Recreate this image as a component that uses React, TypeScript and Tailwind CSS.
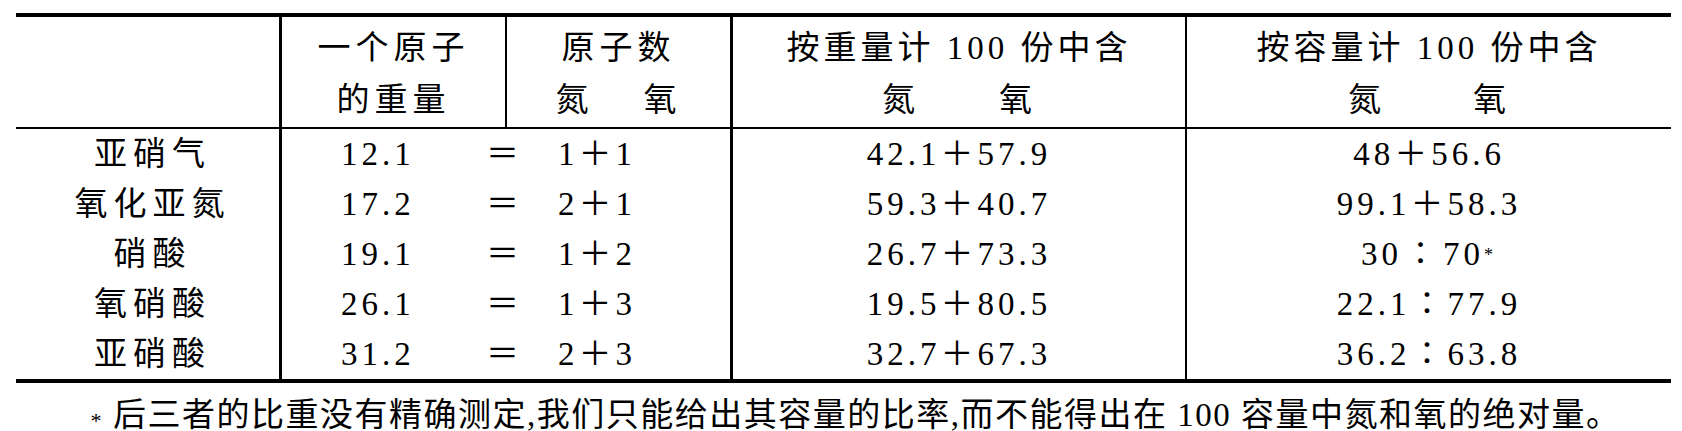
import React from 'react'

// 一行数据：名称、原子重量、原子数、按重量、按容量
interface IRow {
  name: string
  weight: string
  atoms: string
  byWeight: string
  byVolume: React.ReactNode
}

const rows: IRow[] = [
  { name: '亚硝气', weight: '12.1', atoms: '1＋1', byWeight: '42.1＋57.9', byVolume: '48＋56.6' },
  { name: '氧化亚氮', weight: '17.2', atoms: '2＋1', byWeight: '59.3＋40.7', byVolume: '99.1＋58.3' },
  {
    name: '硝酸',
    weight: '19.1',
    atoms: '1＋2',
    byWeight: '26.7＋73.3',
    byVolume: (
      <>
        30<span className="mx-[2px]">∶</span>70<sup className="text-[18px] relative -top-[4px]">*</sup>
      </>
    ),
  },
  { name: '氧硝酸', weight: '26.1', atoms: '1＋3', byWeight: '19.5＋80.5', byVolume: '22.1∶77.9' },
  { name: '亚硝酸', weight: '31.2', atoms: '2＋3', byWeight: '32.7＋67.3', byVolume: '36.2∶63.8' },
]

const NOxPair = ({ gap }: { gap: string }) => (
  <div className={`flex justify-center ${gap}`}>
    <span>氮</span>
    <span>氧</span>
  </div>
)

export default function App() {
  return (
    <div className="min-h-[431px] w-[1682px] bg-white text-black font-['Liberation_Serif','Noto_Sans_CJK_SC',serif] text-[33px] pt-[13px] pl-[16px]">
      <div className="w-[1655px] border-t-4 border-b-4 border-black">
        {/* 表头 */}
        <div className="grid grid-cols-[266px_225px_226px_454px_484px] border-b-2 border-black h-[112px]">
          <div className="border-r-[3px] border-black" />
          <div className="border-r-2 border-black pt-[5px] leading-[52px] text-center tracking-[5px]">
            <div>一个原子</div>
            <div>的重量</div>
          </div>
          <div className="border-r-[3px] border-black pt-[5px] leading-[52px] text-center tracking-[5px]">
            <div>原子数</div>
            <NOxPair gap="gap-[50px]" />
          </div>
          <div className="border-r-2 border-black pt-[5px] leading-[52px] text-center tracking-[4px]">
            <div>按重量计 100 份中含</div>
            <NOxPair gap="gap-[80px]" />
          </div>
          <div className="pt-[5px] leading-[52px] text-center tracking-[4px]">
            <div>按容量计 100 份中含</div>
            <NOxPair gap="gap-[88px]" />
          </div>
        </div>

        {/* 数据行 */}
        <div className="grid grid-cols-[266px_451px_454px_484px]">
          {rows.map(row => (
            <React.Fragment key={row.name}>
              <div className="border-r-[3px] border-black h-[50px] leading-[50px] text-center tracking-[6px] pl-[10px]">
                {row.name}
              </div>
              <div className="border-r-[3px] border-black h-[50px] leading-[50px] flex pl-[59px] tracking-[4px]">
                <span className="w-[72px]">{row.weight}</span>
                <span className="ml-[73px] w-[38px]">＝</span>
                <span className="ml-[34px]">{row.atoms}</span>
              </div>
              <div className="border-r-2 border-black h-[50px] leading-[50px] text-center tracking-[4px]">
                {row.byWeight}
              </div>
              <div className="h-[50px] leading-[50px] text-center tracking-[4px]">{row.byVolume}</div>
            </React.Fragment>
          ))}
        </div>
      </div>

      {/* 注释 */}
      <p className="w-[1655px] mt-[7px] pl-[24px] leading-[50px] text-center tracking-[1.5px]">
        <span className="text-[22px] relative top-[2px] mr-[10px]">*</span>
        后三者的比重没有精确测定,我们只能给出其容量的比率,而不能得出在 100 容量中氮和氧的绝对量。
      </p>
    </div>
  )
}
